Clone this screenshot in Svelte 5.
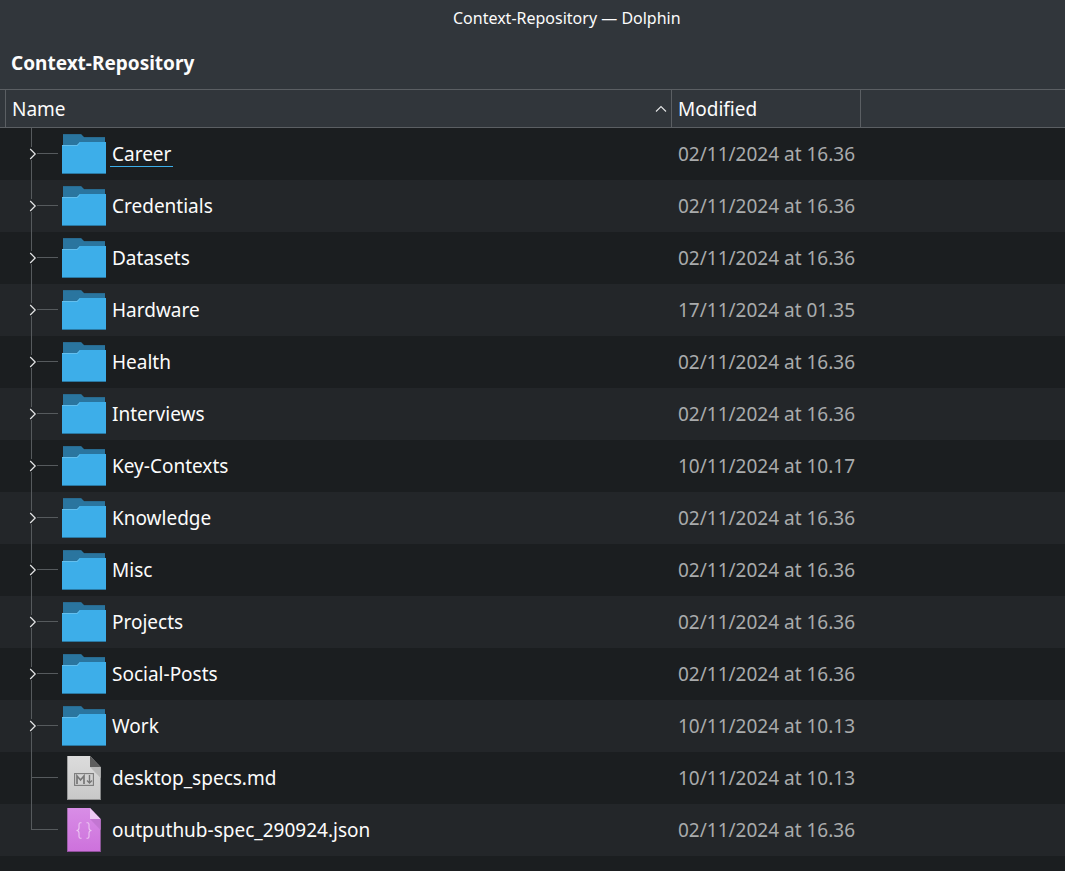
<script>
  const entries = [
    { name: 'Career', modified: '02/11/2024 at 16.36', kind: 'folder', current: true },
    { name: 'Credentials', modified: '02/11/2024 at 16.36', kind: 'folder' },
    { name: 'Datasets', modified: '02/11/2024 at 16.36', kind: 'folder' },
    { name: 'Hardware', modified: '17/11/2024 at 01.35', kind: 'folder' },
    { name: 'Health', modified: '02/11/2024 at 16.36', kind: 'folder' },
    { name: 'Interviews', modified: '02/11/2024 at 16.36', kind: 'folder' },
    { name: 'Key-Contexts', modified: '10/11/2024 at 10.17', kind: 'folder' },
    { name: 'Knowledge', modified: '02/11/2024 at 16.36', kind: 'folder' },
    { name: 'Misc', modified: '02/11/2024 at 16.36', kind: 'folder' },
    { name: 'Projects', modified: '02/11/2024 at 16.36', kind: 'folder' },
    { name: 'Social-Posts', modified: '02/11/2024 at 16.36', kind: 'folder' },
    { name: 'Work', modified: '10/11/2024 at 10.13', kind: 'folder' },
    { name: 'desktop_specs.md', modified: '10/11/2024 at 10.13', kind: 'markdown' },
    { name: 'outputhub-spec_290924.json', modified: '02/11/2024 at 16.36', kind: 'json' }
  ];
</script>

<div class="window">
  <header class="titlebar"><span>Context-Repository — Dolphin</span></header>
  <nav class="location"><b>Context-Repository</b></nav>
  <div class="columns">
    <div class="lead"></div>
    <div class="col name-col">
      <span>Name</span>
      <svg width="12" height="8" viewBox="0 0 12 8"><path d="M1 6.5 6 1.5 11 6.5" fill="none" stroke="#e4e5e6" stroke-width="1.1" /></svg>
    </div>
    <div class="col mod-col"><span>Modified</span></div>
    <div class="rest"></div>
  </div>
  <main>
    {#each entries as entry, i}
      <div class="row">
        <svg class="branch" width="62" height="52" viewBox="0 0 62 52">
          <g fill="#565a5d">
            {#if entry.kind === 'folder'}
              <rect x="31" y="0" width="1" height="19" />
              <rect x="31" y="32" width="1" height="20" />
              <rect x="37" y="25" width="21" height="1" />
            {:else}
              <rect x="31" y="0" width="1" height={i === entries.length - 1 ? 26 : 52} />
              <rect x="31" y="25" width="27" height="1" />
            {/if}
          </g>
          {#if entry.kind === 'folder'}
            <path d="M30.2 21 35.2 26 30.2 31" fill="none" stroke="#e4e5e6" stroke-width="1.2" />
          {/if}
        </svg>
        <svg class="icon" width="44" height="52" viewBox="0 0 44 52">
          {#if entry.kind === 'folder'}
            <path d="M1 6H19L22 9H43V20H1Z" fill="#2a759f" />
            <path d="M1 6H19V7H1ZM22 9H43V10H22Z" fill="#286a8f" />
            <path d="M0 17H15L18 14H44V46H0Z" fill="#3daee9" />
            <path d="M0 17H15L18 14V15L15.4 18H0Z" fill="#63bfee" />
            <path d="M0 45H44V46H0Z" fill="#2a78a2" />
          {:else if entry.kind === 'markdown'}
            <defs><linearGradient id="paper" x2="0" y2="1"><stop stop-color="#dcdcdc" /><stop offset="1" stop-color="#c8c8c8" /></linearGradient></defs>
            <path d="M5.3 4H28L38.6 15V48H5.3Z" fill="url(#paper)" />
            <path d="M28 15H38.6V26Z" fill="#b8b8b8" />
            <path d="M28 4 38.6 15H28Z" fill="#5d5d5d" />
            <path d="M5.3 47H38.6V48H5.3Z" fill="#909090" />
            <rect x="12.6" y="21.6" width="18.8" height="11.8" fill="none" stroke="#7b7b7b" stroke-width="1.1" />
            <path d="M15 32V24L18.5 28 22 24V32" fill="none" stroke="#777" stroke-width="1.7" />
            <path d="M27.5 23V31M25 28.5 27.5 31 30 28.5" fill="none" stroke="#777" stroke-width="1.4" />
          {:else}
            <defs><linearGradient id="violet" x2="0" y2="1"><stop stop-color="#d88de6" /><stop offset="1" stop-color="#cd71dc" /></linearGradient></defs>
            <path d="M5.3 4H28L38.6 15V48H5.3Z" fill="url(#violet)" />
            <path d="M28 15H38.6V26Z" fill="#c376d2" />
            <path d="M28 4 38.6 15H28Z" fill="#ecc9f2" />
            <path d="M5.3 47H38.6V48H5.3Z" fill="#8f4f9b" />
            <path d="M19.5 18.7H18.5Q17 18.7 17 20.5V24Q17 26.5 14.5 26.5 17 26.5 17 29V32.5Q17 34.3 18.5 34.3H19.5M24.5 18.7H25.5Q27 18.7 27 20.5V24Q27 26.5 29.5 26.5 27 26.5 27 29V32.5Q27 34.3 25.5 34.3H24.5" fill="none" stroke="#ecc6f2" stroke-width="1.1" />
          {/if}
        </svg>
        <div class="name"><span class:current={entry.current}>{entry.name}</span></div>
        <div class="modified">{entry.modified}</div>
      </div>
    {/each}
  </main>
</div>

<style>
  :global(body) { margin: 0; background: #1b1e20; }
  .window {
    width: 1065px;
    height: 871px;
    overflow: hidden;
    background: #1b1e20;
    color: #fcfcfc;
    font: 19px/26px "Noto Sans", sans-serif;
    white-space: nowrap;
  }
  .titlebar {
    box-sizing: border-box;
    height: 37px;
    padding-left: 453px;
    background: #31363b;
    font-size: 16px;
    line-height: 37px;
  }
  .location {
    box-sizing: border-box;
    height: 52px;
    padding-left: 11px;
    background: #31363b;
    line-height: 52px;
  }
  .columns {
    box-sizing: border-box;
    display: flex;
    height: 39px;
    border-top: 1px solid #5b5f63;
    border-bottom: 1px solid #5b5f63;
    background: #31363b;
    line-height: 35px;
  }
  .lead { width: 5px; }
  .col {
    box-sizing: border-box;
    display: flex;
    align-items: center;
    border-left: 1px solid #5b5f63;
    padding-left: 6px;
  }
  .col span { padding-top: 2px; }
  .name-col { width: 666px; justify-content: space-between; padding-right: 4px; }
  .mod-col { width: 189px; }
  .rest { flex: 1; border-left: 1px solid #5b5f63; }
  .row { display: flex; align-items: center; height: 52px; }
  .row:nth-child(even) { background: #232629; }
  svg { display: block; flex: none; }
  .name { box-sizing: border-box; width: 572px; padding-left: 4px; }
  .name span { display: inline-block; padding: 0 2px; }
  .name .current { box-shadow: inset 0 -1px #3daee9; }
  .modified { color: #a9abac; }
</style>
